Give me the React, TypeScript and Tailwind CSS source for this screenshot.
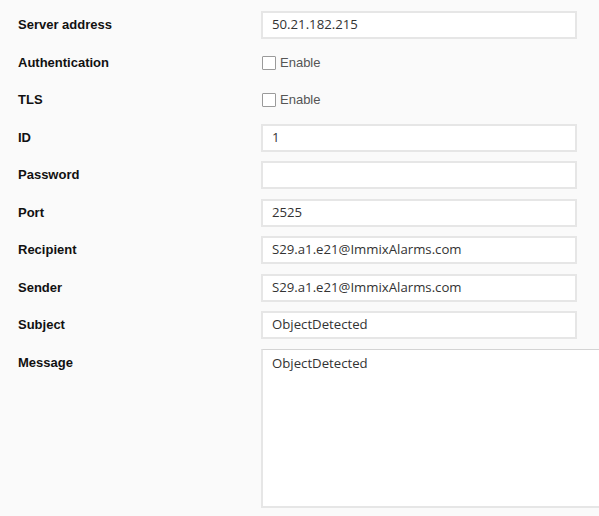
const fields = [
  { label: "Server address", value: "50.21.182.215" },
  { label: "Authentication", check: true },
  { label: "TLS", check: true },
  { label: "ID", value: "1" },
  { label: "Password", value: "" },
  { label: "Port", value: "2525" },
  { label: "Recipient", value: "S29.a1.e21@ImmixAlarms.com" },
  { label: "Sender", value: "S29.a1.e21@ImmixAlarms.com" },
  { label: "Subject", value: "ObjectDetected" },
];

function App() {
  return (
    <div className="w-[599px] h-[516px] overflow-hidden bg-[#fafafa] pt-[11px] pl-[18px]">
      <div className="grid grid-cols-[243px_1fr] gap-y-[9.5px]">
        {fields.map((f) => (
          <div key={f.label} className="contents">
            <div className="h-[28px] flex items-center font-['Liberation_Sans',Arial,sans-serif] font-bold text-[13px] text-[#111]">
              {f.label}
            </div>
            {f.check ? (
              <label className="h-[28px] flex items-center gap-[4px] pl-[1px] font-['Liberation_Sans',Arial,sans-serif] text-[13px] text-[#555]">
                <span className="w-[14px] h-[14px] border border-[#9a9a9a] bg-white rounded-[1px]" />
                Enable
              </label>
            ) : (
              <div className="w-[316px] h-[28px] flex items-center bg-white border-2 border-[#e6e6e6] pl-[9px] font-['Open_Sans',sans-serif] text-[13.2px] text-[#333]">
                {f.value}
              </div>
            )}
          </div>
        ))}
        <div className="h-[28px] flex items-center font-['Liberation_Sans',Arial,sans-serif] font-bold text-[13px] text-[#111]">
          Message
        </div>
        <div className="w-[360px] h-[159px] bg-white border-2 border-[#e6e6e6] border-t border-t-[#d4d4d4] pl-[9px] pt-[4px] font-['Open_Sans',sans-serif] text-[13.2px] text-[#333]">
          ObjectDetected
        </div>
      </div>
    </div>
  );
}

export default App;
